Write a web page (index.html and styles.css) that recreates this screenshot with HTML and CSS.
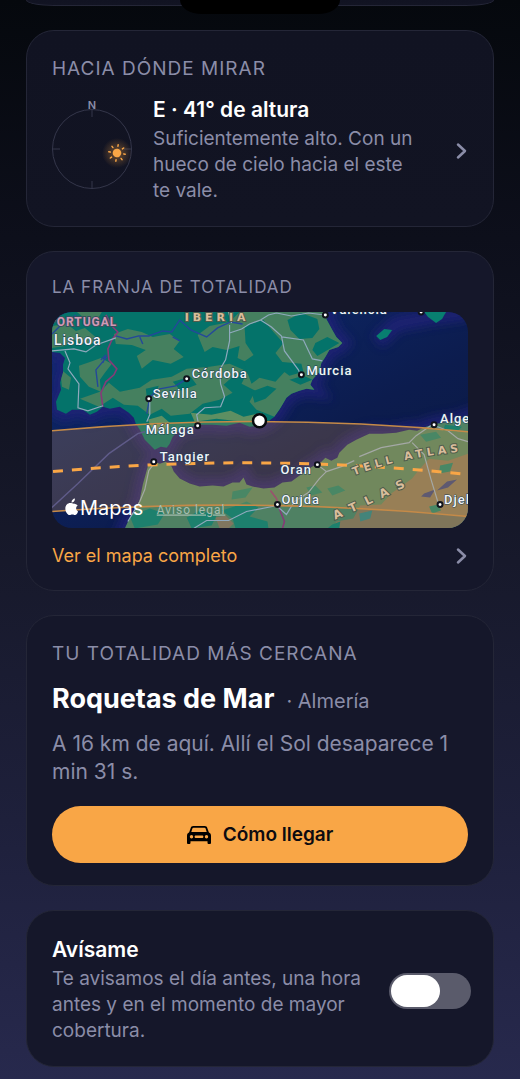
FILE: index.html
```html
<!DOCTYPE html>
<html lang="es">
<head>
    <meta charset="UTF-8">
    <meta name="viewport" content="width=device-width, initial-scale=1.0">
    <title>Eclipse</title>
    <link rel="stylesheet" href="styles.css">
</head>
<body>
    <div class="island"></div>
    <main class="cards">
        <div class="card card-peek"></div>

        <section class="card">
            <h2 class="eyebrow">HACIA DÓNDE MIRAR</h2>
            <a class="direction" href="#direccion">
                <svg class="compass" viewBox="0 0 80 100" role="img" aria-label="Brújula">
                    <defs>
                        <radialGradient id="glow">
                            <stop offset="0" stop-color="#f9a646" stop-opacity=".4"/>
                            <stop offset="1" stop-color="#f9a646" stop-opacity="0"/>
                        </radialGradient>
                    </defs>
                    <g fill="none" stroke="#34364a">
                        <circle cx="40" cy="48" r="39.5"/>
                        <path d="M40 8v8M40 80v8M0 48h8M72 48h8"/>
                    </g>
                    <text class="north" x="40" y="8" text-anchor="middle">N</text>
                    <circle cx="65" cy="52" r="15" fill="url(#glow)"/>
                    <g transform="translate(65 52) rotate(8)" stroke="#f9a646" stroke-width="1.5" stroke-linecap="round">
                        <circle r="4.3" fill="#f9a646" stroke="none"/>
                        <path d="M0-6.8v-1.5M0 6.8v1.5M-6.8 0h-1.5M6.8 0h1.5M4.8-4.8l1.1-1.1M-4.8-4.8l-1.1-1.1M4.8 4.8l1.1 1.1M-4.8 4.8l-1.1 1.1"/>
                    </g>
                </svg>
                <div class="direction-text">
                    <h3 class="title">E · 41° de altura</h3>
                    <p class="desc">Suficientemente alto. Con un hueco de cielo hacia el este te&nbsp;vale.</p>
                </div>
                <svg class="chevron" viewBox="0 0 12 18"><path d="M2 2.5 9 9 2 15.5"/></svg>
            </a>
        </section>

        <section class="card">
            <h2 class="eyebrow eyebrow-small">LA FRANJA DE TOTALIDAD</h2>
            <svg class="map" viewBox="0 0 417 217" role="img" aria-label="Mapa de la franja de totalidad">
                <defs>
                    <path id="iberia" d="M0 0H276L275 7 281 18 285 25 291 31 287 35 278 38 274 45 270 51 268 60 261 68 259 73 263 78 255 77 248 79 240 82 235 86 228 98 223 105 215 111 207 114 198 115 188 111 175 114 161 113 148 113 135 116 127 119 121 125 118 132 115 136 109 135 103 138 98 133 93 128 90 122 88 118 84 112 82 106 77 101 68 95 58 97 51 95 45 100 38 103 31 98 20 98 14 102 5 98 4 90 9 78 8 71 11 61 11 53 13 46 8 41 0 40Z"/>
                    <path id="africa" d="M73 217 78 206 84 198 88 188 91 173 96 155 103 150 108 152 114 150 120 155 122 160 128 167 138 172 148 175 161 174 172 175 181 171 188 171 192 166 195 173 201 175 212 177 223 176 231 171 240 170 251 162 261 155 269 151 274 146 280 149 286 146 288 141 296 133 305 128 318 122 331 122 345 121 358 118 366 119 375 115 385 112 398 110 407 109 417 105V217Z"/>
                    <clipPath id="iberia-clip"><use href="#iberia"/></clipPath>
                    <clipPath id="africa-clip"><use href="#africa"/></clipPath>
                    <filter id="soft" x="-20%" y="-20%" width="140%" height="140%"><feGaussianBlur stdDeviation="5"/></filter>
                    <linearGradient id="sea" x2="1" y2="1">
                        <stop offset="0" stop-color="#0d2b70"/>
                        <stop offset=".6" stop-color="#0c1c4e"/>
                        <stop offset="1" stop-color="#0b1a40"/>
                    </linearGradient>
                </defs>
                <rect width="417" height="217" fill="url(#sea)"/>

                <!-- shallow water -->
                <g fill="none" stroke="#22247a" stroke-width="16" opacity=".75" filter="url(#soft)">
                    <use href="#iberia"/>
                    <use href="#africa"/>
                    <path d="M326 30 345 12 382 5 417 0"/>
                </g>

                <use href="#iberia" fill="#04736a"/>
                <g clip-path="url(#iberia-clip)" fill="#45805f">
                    <path d="M0 14 15 12 24 19 33 16 46 27 38 33 22 28 13 34 0 36ZM25 0 50 0 45 8 31 5ZM62 22 76 17 90 20 101 25 118 22 128 29 122 37 132 45 119 52 101 48 90 57 85 44 94 38 80 33 64 32ZM27 54 38 50 49 46 60 52 53 61 48 68 49 80 37 75 28 65ZM8 57 19 66 17 78 10 75ZM28 87 48 80 57 71 68 80 88 76 100 68 120 65 135 57 158 55 178 52 192 58 181 65 172 73 181 81 168 88 151 92 138 102 119 104 110 97 98 103 86 94 72 93 61 86 47 95ZM146 23 158 14 178 10 188 0 276 0 295 30 269 60 265 80 235 88 223 105 205 98 198 90 204 79 190 72 194 64 203 54 186 46 188 34 175 38 161 35 153 40Z"/>
                    <path fill="#04736a" d="M193 14 212 8 222 20 232 31 224 41 236 57 224 70 208 66 200 72 192 50 202 43 194 31ZM236 8 250 1 266 7 268 17 261 26 248 27 239 18ZM264 31 276 25 288 31 278 37 266 44 261 38ZM231 50 250 52 252 60 238 64 230 58ZM200 80 216 74 225 77 214 87 203 91ZM238 68 252 64 261 68 249 73ZM121 70 139 65 145 73 129 79ZM94 77 107 74 104 82 95 85Z"/>
                    <path fill="#5e8f62" d="M96 108 110 104 118 111 111 122 101 118ZM139 101 160 103 179 99 192 105 210 101 212 111 182 109 165 107 143 110Z"/>
                </g>
                <g fill="#087f70">
                    <path d="M325 24 333 17 341 18 336 25 329 28Z"/>
                    <path d="M373 0H395L391 7 385 11 377 5Z"/>
                </g>

                <use href="#africa" fill="#4f8163"/>
                <g clip-path="url(#africa-clip)">
                    <path fill="#80765a" d="M417 142 397 149 378 147 368 158 361 167 340 182 330 193 309 194 302 207 285 210 281 217H417Z"/>
                    <path fill="#80765f" d="M164 206 174 204 182 212 177 217H168Z"/>
                    <g fill="#1d806d">
                        <path d="M181 180 201 176 194 186 180 188ZM170 199 183 195 195 190 207 196 198 205 216 210 217 217H184L181 207ZM135 206 148 199 165 204 160 214 140 217ZM78 205 98 197 113 202 106 213 83 217ZM276 177 287 174 294 179 281 184ZM389 154 402 151 399 160 388 162ZM369 123 385 120 390 126 375 130ZM255 176 264 174 271 181 260 184ZM394 113 411 115 406 120 392 119ZM378 195 387 193 390 199 381 202ZM281 213 289 210 288 217H276Z"/>
                        <path fill="#43847a" d="M308 202 321 199 319 207 309 210Z"/>
                    </g>
                    <path fill="#37477c" d="M373 182 384 178 379 186 370 185ZM386 179 396 170 406 168 397 176Z"/>
                </g>

                <!-- rivers and borders -->
                <g fill="none" stroke="#24489a" stroke-width="1.4">
                    <path d="M64 24 75 27 87 24 97 24 111 19 120 20 128 8 139 18 155 25 166 16 179 10 191 12M88 25 91 32M121 25 128 29M55 45 44 58 46 75M135 67 124 74 108 77 98 85 95 102M51 51 54 43 49 48M0 22 10 12 24 3"/>
                    <path stroke="#39499a" d="M0 196 26 172 57 142 86 122 93 120"/>
                </g>
                <path fill="none" stroke="#853b78" stroke-width="1.6" d="M54 3 60 14 66 20 60 28 56 37 57 48 65 57 62 63 54 70 49 81 51 95M219 179 225 187 229 200 233 210 231 217"/>

                <!-- roads -->
                <g fill="none" stroke="#8fa9bd" stroke-width="1.2">
                    <path d="M0 39 22 37 34 40 44 33 64 26M13 39 18 51 16 57 27 72 26 96 36 99 51 94M98 88 98 103 95 110M178 13 178 29 174 48 168 58 169 72 173 85 169 95 153 96 145 103 147 113M178 21 190 17 198 12 209 8 217 3 225 1M209 8 220 15 230 24 233 39 247 58 249 63M230 25 252 28 261 47 271 49M225 1 240 4 257 1 274 3M180 11 177 0"/>
                    <path d="M103 151 97 159 93 178 88 190 76 210M142 217 155 209 177 209 195 200 226 194M226 195 235 203 243 190 257 181 268 167 275 160 266 153M275 160 290 155 303 149M308 145 330 136 358 131 365 124 381 113 397 119 407 127 417 130M361 131 373 143 380 168 387 191"/>
                </g>

                <!-- totality band -->
                <path fill="#f9a646" fill-opacity=".2" d="M0 119Q208 100 417 120V205Q208 185 0 200Z"/>
                <path class="band-edge" d="M0 119Q208 100 417 120M0 200Q208 185 417 205"/>
                <path class="band-center" d="M1 160Q208 141 417 163"/>

                <g class="pins">
                    <circle cx="135" cy="67" r="2.5"/>
                    <circle cx="97" cy="87" r="2.5"/>
                    <circle cx="250" cy="63" r="2.5"/>
                    <circle cx="274" cy="3" r="2.5"/>
                    <circle cx="370" cy="0" r="2.5"/>
                    <circle cx="146" cy="114" r="2.5"/>
                    <circle cx="102" cy="150" r="2.5"/>
                    <circle cx="266" cy="153" r="2.5"/>
                    <circle cx="383" cy="113" r="2.5"/>
                    <circle cx="226" cy="193" r="2.5"/>
                    <circle cx="389" cy="193" r="2.5"/>
                </g>
                <g class="places">
                    <text class="lisboa" x="2" y="33">Lisboa</text>
                    <text x="140" y="66">Córdoba</text>
                    <text x="101" y="86">Sevilla</text>
                    <text x="255" y="63">Murcia</text>
                    <text x="279" y="2">Valencia</text>
                    <text x="94" y="122">Málaga</text>
                    <text x="108" y="149">Tangier</text>
                    <text x="229" y="162">Oran</text>
                    <text x="389" y="111">Alge</text>
                    <text x="230" y="192">Oujda</text>
                    <text x="393" y="192">Djel</text>
                </g>
                <text class="country" x="-4" y="14">PORTUGAL</text>
                <text class="region" x="133" y="9">IBERIA</text>
                <path id="tell" fill="none" d="M303 164Q350 144 440 137"/>
                <path id="atlas" fill="none" d="M284 208Q322 192 376 164"/>
                <text class="region region-small"><textPath href="#tell">TELL ATLAS</textPath></text>
                <text class="region region-wide"><textPath href="#atlas">ATLAS</textPath></text>

                <circle cx="208" cy="109" r="6.5" fill="#fff" stroke="#07090d" stroke-width="2.5"/>
                <g fill="#fff">
                    <path d="M24.8 192.8C23.3 192.8 22.3 191.9 20.4 191.9C17.1 191.9 14.2 194.5 14.2 198.7C14.2 202.7 17 207 19.5 207C20.8 207 21.4 206.2 23 206.2C24.6 206.2 25.1 207 26.4 207C28 207 29.3 204.8 30.1 202.4C27.1 201 26.9 196.6 29.7 195.1C28.5 193.4 26.5 192.8 24.8 192.8ZM22 191.2C21.7 188.600 24 186.400 26.2 186.200C26.500 188.800 24.300 191.400 22 191.200Z" transform="translate(2 38) scale(.8)"/>
                    <text class="brand" x="28" y="203">Mapas</text>
                </g>
                <text class="legal" x="105" y="202">Aviso legal</text>
            </svg>
            <a class="map-link" href="#mapa">
                <span>Ver el mapa completo</span>
                <svg class="chevron" viewBox="0 0 12 18"><path d="M2 2.5 9 9 2 15.5"/></svg>
            </a>
        </section>

        <section class="card">
            <h2 class="eyebrow">TU TOTALIDAD MÁS CERCANA</h2>
            <div class="place">
                <h3 class="place-name">Roquetas de Mar</h3>
                <span class="place-region">· Almería</span>
            </div>
            <p class="place-info">A 16 km de aquí. Allí el Sol desaparece 1 min 31 s.</p>
            <button class="go" type="button">
                <svg class="car" viewBox="0 0 24 20">
                    <path fill-rule="evenodd" d="M6.2 1h11.600c1.300 0 2.100.7 2.500 1.900l1.500 4.400c1.300.8 2.200 1.700 2.200 3.400v7c0 .8-.5 1.300-1.200 1.300h-1c-.8 0-1.300-.5-1.300-1.300v-1.500h-17v1.500c0 .8-.5 1.300-1.300 1.300h-1C.5 19 0 18.500 0 17.700v-7C0 9 .9 8.100 2.200 7.300l1.500-4.400C4.100 1.700 4.900 1 6.200 1ZM6.500 2.700c-.6 0-.9.3-1.100.9L4.300 7h15.400l-1.100-3.400c-.2-.6-.5-.9-1.100-.9ZM4.500 10a1.700 1.700 0 1 0 0 3.400 1.700 1.700 0 0 0 0-3.400ZM19.500 10a1.700 1.700 0 1 0 0 3.400 1.700 1.700 0 0 0 0-3.400ZM9 10.400c-.9 0-1.400.5-1.400 1.300S8.100 13 9 13h6c.9 0 1.400-.5 1.400-1.300s-.5-1.300-1.400-1.300Z"/>
                </svg>
                Cómo llegar
            </button>
        </section>

        <section class="card notify">
            <label class="notify-text" for="notify">
                <span class="title">Avísame</span>
                <span class="desc">Te avisamos el día antes, una hora antes y en el momento de mayor cobertura.</span>
            </label>
            <input class="switch" id="notify" type="checkbox" role="switch">
        </section>
    </main>
</body>
</html>
```
FILE: styles.css
```css
* {
    box-sizing: border-box;
}
body {
    margin: 0;
    min-height: 100vh;
    font-family: Inter, "Liberation Sans", sans-serif;
    color: #fff;
    background: linear-gradient(#05080d 0%, #0d0f1b 22%, #17192b 52%, #1e203b 76%, #27294d 100%);
}
h2, h3, p {
    margin: 0;
}
a {
    color: inherit;
    text-decoration: none;
}
.island {
    position: absolute;
    top: 0;
    left: 50%;
    width: 160px;
    height: 14px;
    margin-left: -80px;
    background: #000;
    border-radius: 0 0 22px 22px / 0 0 14px 14px;
    z-index: 1;
}
.cards {
    display: flex;
    flex-direction: column;
    gap: 24px;
    padding: 0 26px 12px;
}
.card {
    padding: 26px 25px 22px;
    border: 1px solid #242637;
    border-radius: 28px;
    background: linear-gradient(#111322, #121423);
}
.card + .card ~ .card {
    background: #15172a;
}
.card-peek {
    height: 6px;
    padding: 0;
    border-top: 0;
    border-radius: 0 0 28px 28px / 0 0 6px 6px;
}
.eyebrow {
    margin-bottom: 16px;
    font-size: 19px;
    font-weight: 400;
    line-height: 24px;
    letter-spacing: 1px;
    color: #8b8da8;
}
.eyebrow-small {
    font-size: 17px;
    line-height: 18px;
}
.direction {
    display: flex;
    align-items: center;
    gap: 21px;
}
.compass {
    flex: none;
    width: 80px;
    height: 100px;
}
.north {
    font-size: 11px;
    font-weight: 600;
    fill: #8b8da8;
}
.direction-text {
    flex: 1;
}
.title {
    display: block;
    margin-bottom: 3px;
    font-size: 21px;
    font-weight: 600;
    line-height: 26px;
}
.desc {
    display: block;
    font-size: 19px;
    line-height: 26px;
    color: #8b8da8;
}
.chevron {
    flex: none;
    width: 12px;
    height: 18px;
    fill: none;
    stroke: #8b8da8;
    stroke-width: 2.5;
    stroke-linecap: round;
    stroke-linejoin: round;
}
.map {
    display: block;
    width: 100%;
    border-radius: 20px;
}
.band-edge {
    fill: none;
    stroke: #c58a48;
    stroke-width: 1.6;
}
.band-center {
    fill: none;
    stroke: #f9a646;
    stroke-width: 3;
    stroke-dasharray: 10 9;
}
.pins circle {
    fill: #fff;
    stroke: #10131c;
    stroke-width: 2;
}
.places text {
    font-family: Roboto, sans-serif;
    font-size: 13px;
    font-weight: 500;
    letter-spacing: 1px;
    fill: #f1f4f8;
    stroke: #1c3d55;
    stroke-width: 1px;
    paint-order: stroke;
}
.places .lisboa {
    font-size: 14px;
}
.country {
    font-family: Roboto, sans-serif;
    font-size: 12px;
    font-weight: 700;
    letter-spacing: 1px;
    fill: #d199b5;
    stroke: #36505e;
    stroke-width: 2px;
    paint-order: stroke;
}
.region {
    font-family: "DejaVu Sans", sans-serif;
    font-size: 11px;
    font-weight: 700;
    letter-spacing: 4px;
    fill: #d9bd9b;
    stroke: #4f5c4c;
    stroke-width: 2px;
    paint-order: stroke;
}
.region-wide {
    font-size: 12px;
    letter-spacing: 9px;
}
.brand {
    font-size: 20px;
}
.legal {
    font-family: Roboto, sans-serif;
    font-size: 12px;
    letter-spacing: 1px;
    fill: #a6bdb0;
    text-decoration: underline;
}
.map-link {
    display: flex;
    align-items: center;
    justify-content: space-between;
    margin-top: 16px;
    font-size: 18px;
    line-height: 24px;
    color: #f9a646;
}
.place {
    display: flex;
    align-items: baseline;
    gap: 12px;
    margin-bottom: 12px;
    line-height: 34px;
}
.place-name {
    font-size: 27px;
    font-weight: 700;
}
.place-region {
    font-size: 20px;
    color: #8b8da8;
}
.place-info {
    margin-bottom: 20px;
    font-size: 21px;
    line-height: 28px;
    color: #8b8da8;
}
.go {
    display: flex;
    align-items: center;
    justify-content: center;
    gap: 12px;
    width: 100%;
    height: 57px;
    border: none;
    border-radius: 29px;
    background: #f9a646;
    color: #0d0b10;
    font-family: inherit;
    font-size: 19px;
    font-weight: 600;
    cursor: pointer;
}
.car {
    width: 24px;
    height: 20px;
}
.notify {
    display: flex;
    align-items: center;
    gap: 20px;
}
.notify-text {
    flex: 1;
}
.switch {
    appearance: none;
    flex: none;
    display: flex;
    width: 82px;
    height: 36px;
    margin: 0 -3px 0 0;
    padding: 2px;
    border-radius: 18px;
    background: #5a5b6b;
    cursor: pointer;
}
.switch::before {
    content: "";
    width: 49px;
    height: 32px;
    border-radius: 16px;
    background: #fff;
}
.switch:checked {
    justify-content: flex-end;
    background: #f9a646;
}
```
